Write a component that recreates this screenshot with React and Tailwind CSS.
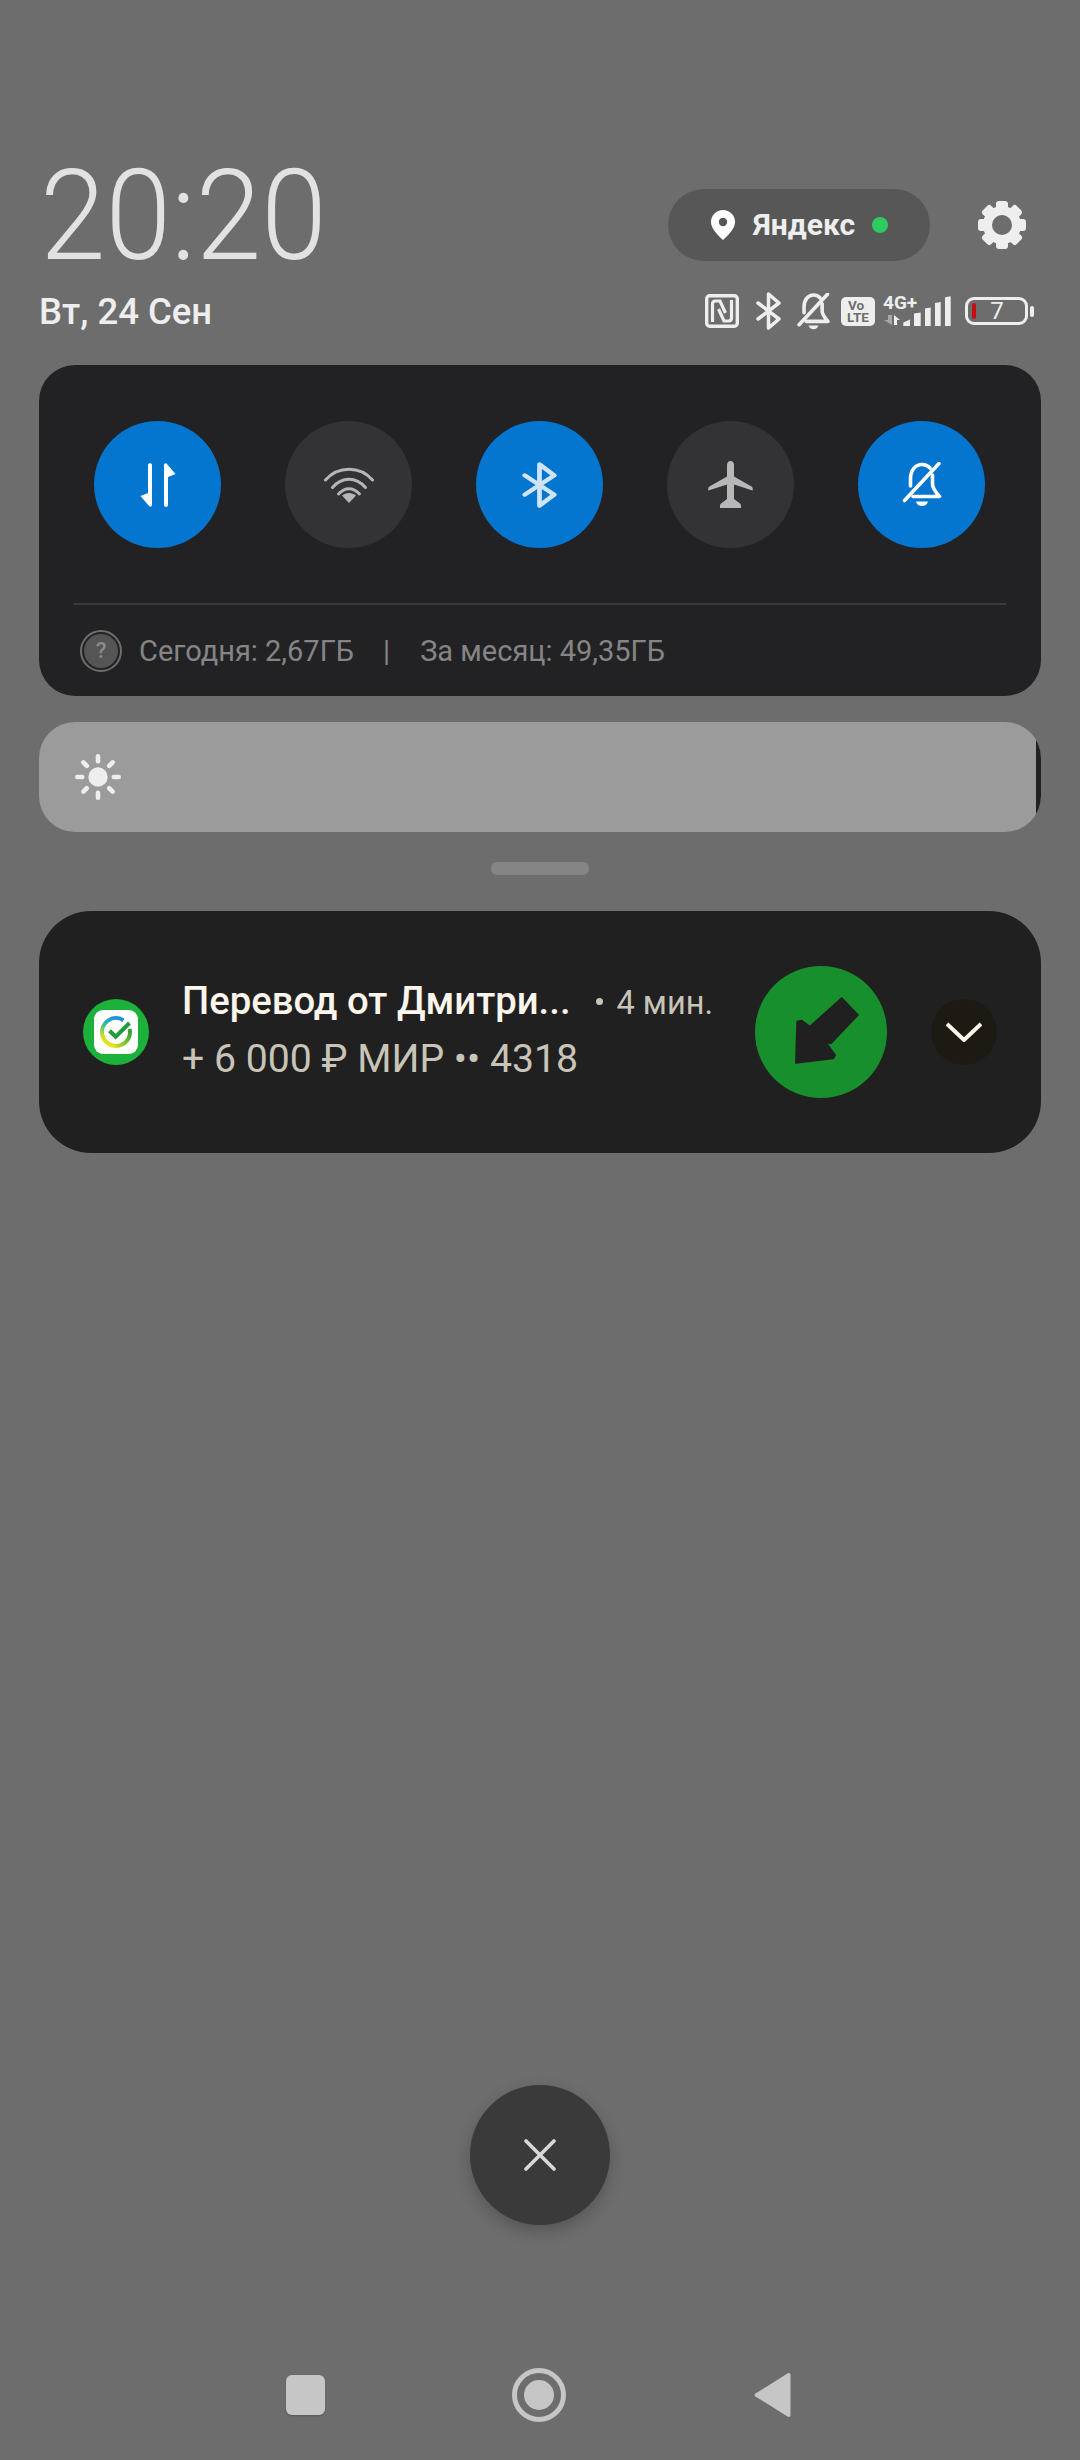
import React from "react";

const Gear = () => (
  <svg width="48" height="48" viewBox="0 0 48 48" className="shrink-0">
    {[0, 45, 90, 135, 180, 225, 270, 315].map((a) => (
      <rect key={a} x="18" y="0" width="12" height="12" rx="3" fill="#eeeeee" transform={`rotate(${a} 24 24)`} />
    ))}
    <circle cx="24" cy="24" r="14.5" fill="none" stroke="#eeeeee" strokeWidth="9" />
  </svg>
);

const Pin = () => (
  <svg width="24" height="30" viewBox="0 0 24 30" className="shrink-0">
    <path d="M12 0C5.4 0 0 5.2 0 11.8 0 19 7 25.5 12 30c5-4.5 12-11 12-18.2C24 5.2 18.6 0 12 0z" fill="#ffffff" />
    <circle cx="12" cy="12" r="4.2" fill="#575757" />
  </svg>
);

const Nfc = () => (
  <svg width="34" height="34" viewBox="0 0 34 34" fill="none" stroke="#eeeeee" className="shrink-0">
    <rect x="1.7" y="1.7" width="30.600" height="30.600" rx="3" strokeWidth="3.400" />
    <path d="M7.500 28V10Q7.500 7 10.500 7H15L20.500 19" strokeWidth="3.200" />
    <path d="M26.500 6V24Q26.500 27 23.500 27H19L13.500 15" strokeWidth="3.200" />
  </svg>
);

const Bluetooth = ({ w, h, color, sw }) => (
  <svg width={w} height={h} viewBox="0 0 25 38" preserveAspectRatio="none" fill="none" stroke={color} strokeWidth={sw} strokeLinejoin="round" strokeLinecap="round" className="shrink-0">
    <path d="M2 11l21 16-10.500 9V2L23 11 2 27" />
  </svg>
);

const BellOff = ({ w, h, color, sw }) => (
  <svg width={w} height={h} viewBox="0 0 40 45" fill="none" stroke={color} strokeWidth={sw} strokeLinecap="round" strokeLinejoin="round" className="shrink-0">
    <path d="M8.500 24V17C8.500 8 13.500 2.500 20 2.500c3.500 0 6 1.300 8 3.500" />
    <path d="M30.500 13v9c0 4.500 3 8 7 12.500H11" />
    <path d="M37 1.500L2.500 38.500" />
    <path d="M14 39.500h12c-.8 3-3 4.500-6 4.500s-5.200-1.500-6-4.500z" fill={color} stroke="none" />
  </svg>
);

const VoLte = () => (
  <div className="w-[34px] h-[29px] rounded-[5px] bg-[#eeeeee] shrink-0 flex flex-col items-center justify-center text-[#6d6d6d] font-bold text-[13.500px] leading-[12.500px]">
    <span className="-ml-1">Vo</span>
    <span>LTE</span>
  </div>
);

const Network = () => (
  <div className="relative w-[68px] h-[30px] shrink-0">
    <svg width="68" height="30" viewBox="0 0 68 30" className="block">
      <path d="M20.300 30v-3.500l6.700-3V30zM31 30V17.500l6.700-1V30zM42 30V12.500l5.700-1V30zM52 30V7l5.700-1V30zM62 30V1.200l5.700-1V30z" fill="#eeeeee" />
      <path d="M9 19v10L1 24h4v-5z" fill="#a8a8a8" />
      <path d="M11 29V19l6 5h-3v5z" fill="#eeeeee" />
    </svg>
    <span className="absolute left-0 -top-[3px] text-[#eeeeee] font-bold text-[19px] leading-[20px]">4G+</span>
  </div>
);

const Battery = () => (
  <div className="flex items-center shrink-0 gap-[2px]">
    <div className="relative w-[63px] h-[28px] rounded-[9px] border-[3px] border-[#eeeeee] flex items-center justify-center text-[#eeeeee] text-[24px] leading-[22px] pl-[1px]">
      <div className="absolute left-[4px] top-[3px] w-[4px] h-[16px] rounded-[2px] bg-[#c01010]"></div>
      7
    </div>
    <div className="w-[4px] h-[11px] rounded-[2px] bg-[#eeeeee]"></div>
  </div>
);

const Arrows = () => (
  <svg width="36" height="44" viewBox="0 0 36 44">
    <path d="M8 2V30L.5 33 9.500 43.500C11 44 12 43 12 42V2C12-.5 8-.5 8 2z" fill="#ffffff" />
    <path d="M28 42V14L35.500 11 26.500.5C25 0 24 1 24 2V42C24 44.500 28 44.500 28 42z" fill="#ffffff" />
  </svg>
);

const Wifi = () => (
  <svg width="50" height="36" viewBox="0 0 50 36" fill="none" stroke="#b5b5b5" strokeWidth="3" strokeLinecap="round">
    <path d="M1.500 13C14 -1.500 36 -1.500 48.500 13" />
    <path d="M8.500 20.500C18 9.500 32 9.500 41.500 20.500" />
    <path d="M14.500 27C21 20 29 20 35.500 27" />
    <path d="M18 28.500C22 25 28 25 32 28.500L25 36z" fill="#b5b5b5" stroke="none" />
  </svg>
);

const Plane = () => (
  <svg width="45" height="47" viewBox="0 0 45 47" fill="#b8b8b8">
    <path d="M19 4.500a3.500 4.500 0 0 1 7 0V15.500L43.500 25.500C44.800 26.300 45 28 44.600 29.500L26 23.500V38L32 42.500c1 .8 1.200 2.500 1 4.500H12c-.2-2 0-3.700 1-4.500L19 38V23.500L.4 29.500C0 28 .2 26.300 1.500 25.500L19 15.500z" />
  </svg>
);

const Quick = ({ on, children }) => (
  <div className={on ? "w-[127px] h-[127px] rounded-full bg-[#0476cf] flex items-center justify-center" : "w-[127px] h-[127px] rounded-full bg-[#333335] flex items-center justify-center"}>
    {children}
  </div>
);

const Sun = () => (
  <svg width="46" height="46" viewBox="0 0 46 46" fill="#eeeeee">
    <circle cx="23" cy="23" r="9.700" />
    {[0, 45, 90, 135, 180, 225, 270, 315].map((a) => (
      <rect key={a} x="20.700" y="0" width="4.600" height="9.500" rx="2.300" transform={`rotate(${a} 23 23)`} />
    ))}
  </svg>
);

const Sber = () => (
  <svg width="44" height="44" viewBox="0 0 44 44" fill="none">
    <defs>
      <linearGradient id="sa" x1="0.700" y1="0" x2="0.300" y2="1">
        <stop offset="0" stopColor="#1d8fe0" />
        <stop offset="0.4" stopColor="#2cc0a0" />
        <stop offset="0.8" stopColor="#d6dc20" />
        <stop offset="1" stopColor="#eee420" />
      </linearGradient>
      <linearGradient id="sb" x1="0" y1="1" x2="1" y2="0">
        <stop offset="0" stopColor="#c8dc28" />
        <stop offset="1" stopColor="#1f9d3c" />
      </linearGradient>
    </defs>
    <rect width="44" height="44" rx="9" fill="#ffffff" />
    <path d="M29.500 10.200A14 14 0 0 0 8.300 25 14 14 0 0 0 22 36" stroke="url(#sa)" strokeWidth="4" />
    <path d="M22 36A14 14 0 0 0 35.600 19" stroke="url(#sb)" strokeWidth="4" />
    <path d="M15.500 20.700l6.200 6 13.800-13.700" stroke="#1f9d3c" strokeWidth="4" />
  </svg>
);

const BigArrow = () => (
  <svg width="132" height="132" viewBox="0 0 132 132" className="block">
    <path
      d="M86.700 32.300L102.700 49 75.700 77.300 70 75.700 80 89 78.300 92.300 41 96.700 42.300 55.700 46.700 54.700 55 60.700z"
      fill="#202020"
      stroke="#202020"
      strokeWidth="2"
      strokeLinejoin="round"
    />
  </svg>
);

export default function App() {
  return (
    <div className="w-[1080px] h-[2460px] bg-[#6d6d6d] px-[39px] pt-[151px] flex flex-col [font-family:Roboto,'Noto_Sans',sans-serif]">
      <div className="flex items-start h-[130px] shrink-0">
        <div className="text-[127px] leading-[130px] font-light text-[#e2e2e2] ml-[1px] origin-left scale-x-[0.93]">20:20</div>
        <div className="ml-auto mt-[38px] mr-[15px] flex items-center gap-[48px]">
          <div className="w-[262px] h-[72px] rounded-full bg-[#575757] flex items-center pl-[43px]">
            <Pin />
            <span className="ml-[18px] text-[30px] leading-[36px] font-bold text-[#eeeeee]">Яндекс</span>
            <span className="ml-[17px] w-[16px] h-[16px] rounded-full bg-[#2ecc60]"></span>
          </div>
          <Gear />
        </div>
      </div>

      <div className="flex items-center h-[60px] shrink-0">
        <div className="text-[36.500px] leading-[44px] font-medium text-[#eeeeee] mt-[1px]">Вт, 24 Сен</div>
        <div className="ml-auto mr-[7px] flex items-center">
          <Nfc />
          <div className="ml-[17px]"><Bluetooth w={25} h={38} color="#eeeeee" sw={3.5} /></div>
          <div className="ml-[16px]"><BellOff w={33} h={37} color="#eeeeee" sw={4.4} /></div>
          <div className="ml-[11px]"><VoLte /></div>
          <div className="ml-[8px]"><Network /></div>
          <div className="ml-[14px]"><Battery /></div>
        </div>
      </div>

      <div className="mt-[24px] h-[331px] shrink-0 rounded-[36px] bg-[#222224] flex flex-col">
        <div className="mt-[56px] pl-[55px] flex gap-[64px]">
          <Quick on><Arrows /></Quick>
          <Quick><Wifi /></Quick>
          <Quick on><Bluetooth w={35} h={46} color="#cfe5f7" sw={3.4} /></Quick>
          <Quick><Plane /></Quick>
          <Quick on><BellOff w={40} h={45} color="#ffffff" sw={3.6} /></Quick>
        </div>
        <div className="mt-[55px] mx-[35px] h-[2px] bg-[#3a3a3c]"></div>
        <div className="flex-1 flex items-center pl-[41px] text-[29px] leading-[36px] text-[#858585]">
          <div className="w-[42px] h-[42px] rounded-full border-2 border-[#6e6e6e] p-[2px] shrink-0">
            <div className="w-full h-full rounded-full bg-[#555555] flex items-center justify-center text-[22px] leading-none font-medium text-[#8a8a8a]">?</div>
          </div>
          <span className="ml-[17px]">Сегодня: 2,67ГБ</span>
          <span className="ml-[29px] text-[#858585]">|</span>
          <span className="ml-[30px]">За месяц: 49,35ГБ</span>
        </div>
      </div>

      <div className="mt-[26px] h-[110px] shrink-0 rounded-[36px] bg-[#9b9b9b] relative overflow-hidden flex items-center pl-[36px]">
        <Sun />
        <div className="absolute right-0 inset-y-0 w-[5px] bg-[#222222]"></div>
      </div>

      <div className="mt-[30px] self-center w-[98px] h-[13px] rounded-[6px] bg-[#858585] shrink-0"></div>

      <div className="mt-[36px] h-[242px] shrink-0 rounded-[52px] bg-[#202020] flex items-center pl-[44px] pr-[44px]">
        <div className="w-[66px] h-[66px] rounded-full bg-[#1cb13a] flex items-center justify-center shrink-0">
          <Sber />
        </div>
        <div className="ml-[33px] flex-1 min-w-0 mb-[4px]">
          <div className="flex items-baseline h-[58px]">
            <span className="text-[38.300px] leading-[58px] font-medium text-[#fbf5ec] whitespace-nowrap">Перевод от Дмитри...</span>
            <span className="ml-[25px] w-[7px] h-[7px] rounded-full bg-[#c8c4b8] shrink-0 self-center"></span>
            <span className="ml-[14px] text-[32.500px] leading-[58px] text-[#c8c4b8] whitespace-nowrap">4 мин.</span>
          </div>
          <div className="text-[39.200px] leading-[58px] text-[#c8c4b8] whitespace-nowrap">+ 6 000 ₽ МИР •• 4318</div>
        </div>
        <div className="w-[132px] h-[132px] rounded-full bg-[#178f2d] shrink-0">
          <BigArrow />
        </div>
        <div className="ml-[44px] w-[66px] h-[66px] rounded-full bg-[#1c1a12] flex items-center justify-center shrink-0">
          <svg width="36" height="20" viewBox="0 0 36 20" fill="none" stroke="#fbf5ec" strokeWidth="4">
            <path d="M1 2l17 16L35 2" />
          </svg>
        </div>
      </div>

      <div className="mt-[932px] self-center w-[140px] h-[140px] rounded-full bg-[#3a3a3a] shadow-[0_6px_16px_rgba(0,0,0,0.22)] flex items-center justify-center shrink-0">
        <svg width="32" height="32" viewBox="0 0 32 32" stroke="#d8d8d8" strokeWidth="3.600" strokeLinecap="round">
          <path d="M2 2l28 28M30 2L2 30" />
        </svg>
      </div>

      <div className="mt-[143px] h-[54px] shrink-0 relative flex items-center">
        <div className="ml-[247px] w-[39px] h-[40px] rounded-[6px] bg-[#c6c6c6] shadow-[0_1px_2px_rgba(0,0,0,0.2)]"></div>
        <div className="ml-[187px] w-[54px] h-[54px] rounded-full border-[5px] border-[#c6c6c6] flex items-center justify-center">
          <div className="w-[30px] h-[30px] rounded-full bg-[#c6c6c6]"></div>
        </div>
        <svg width="37" height="46" viewBox="0 0 37 46" className="ml-[188px]">
          <path d="M33.500 1.500L1.500 21.500c-1.300 .9-1.300 2.100 0 3l32 20c1.500 .9 3 .2 3-1.500V3c0-1.700-1.500-2.400-3-1.500z" fill="#c6c6c6" />
        </svg>
      </div>
    </div>
  );
}
